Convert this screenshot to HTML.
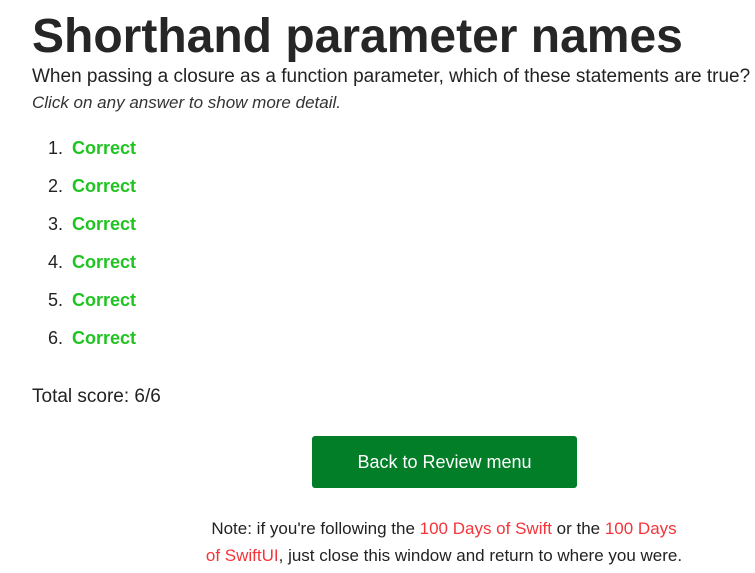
<!DOCTYPE html>
<html><head><style>
body{margin:0;width:755px;height:573px;overflow:hidden;background:#fff;font-family:"Liberation Sans",sans-serif;color:#222;position:relative}
div,p{position:absolute;margin:0;white-space:nowrap}
h1{position:absolute;margin:0;left:32px;top:9px;font-size:48px;font-weight:bold;letter-spacing:0px;color:#262626;line-height:56px}
.s{left:32px;top:65px;font-size:19px;line-height:24px}
.i{left:32px;top:92px;font-size:17px;font-style:italic;line-height:22px;color:#333}
.li{left:48px;font-size:18px;line-height:22px}
.li b{color:#1fc421;margin-left:9px}
.t{left:32px;top:385px;font-size:19px;line-height:24px}
.btn{left:312px;top:436px;width:265px;height:52px;background:#027e28;border-radius:3px;color:#fff;font-size:18px;text-align:center;line-height:52px}
.n{left:144px;width:600px;text-align:center;font-size:17px;line-height:27px;top:515px}
.n span{color:#f4343a}
</style></head><body>
<h1>Shorthand parameter names</h1>
<div class="s">When passing a closure as a function parameter, which of these statements are true?</div>
<div class="i">Click on any answer to show more detail.</div>
<div class="li" style="top:137px">1.<b>Correct</b></div>
<div class="li" style="top:175px">2.<b>Correct</b></div>
<div class="li" style="top:213px">3.<b>Correct</b></div>
<div class="li" style="top:251px">4.<b>Correct</b></div>
<div class="li" style="top:289px">5.<b>Correct</b></div>
<div class="li" style="top:327px">6.<b>Correct</b></div>
<div class="t">Total score: 6/6</div>
<div class="btn">Back to Review menu</div>
<div class="n">Note: if you're following the <span>100 Days of Swift</span> or the <span>100 Days</span><br><span>of SwiftUI</span>, just close this window and return to where you were.</div>
</body></html>
